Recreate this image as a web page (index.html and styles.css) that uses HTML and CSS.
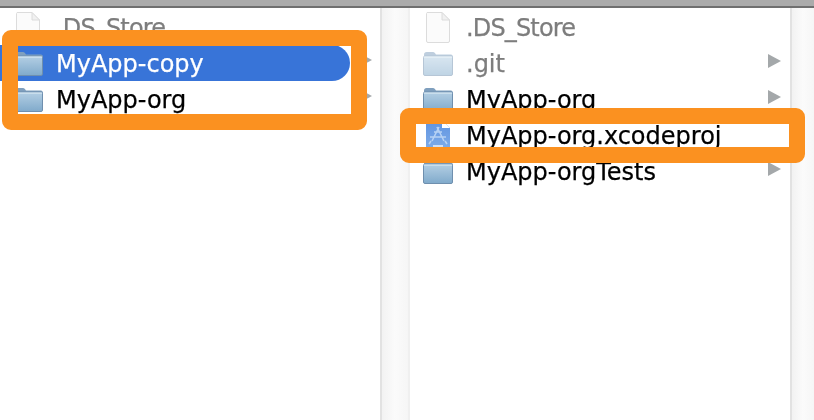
FILE: index.html
```html
<!DOCTYPE html>
<html lang="en">
<head>
<meta charset="utf-8">
<title>Finder columns</title>
<link rel="stylesheet" href="styles.css">
</head>
<body>
<svg class="defs" width="0" height="0" aria-hidden="true">
  <defs>
    <linearGradient id="fold" x1="0" y1="0" x2="0" y2="1"><stop offset="0" stop-color="#b4cfe4"/><stop offset="1" stop-color="#80aacb"/></linearGradient>
    <linearGradient id="proj" x1="0" y1="0" x2="0" y2="1"><stop offset="0" stop-color="#5f93e0"/><stop offset="1" stop-color="#80aeea"/></linearGradient>
    <symbol id="folder" viewBox="0 0 30 25">
      <path d="M1 6V3.500C1 2 2 1 3.500 1H10C11.500 1 12 2 13 3.500H28C29 3.500 30 4.500 30 6V8H1Z" fill="#7f9fbe"/>
      <rect x="0.500" y="5" width="29" height="19.500" rx="1.500" fill="url(#fold)" stroke="#6f8fae" stroke-width="1"/>
      <rect x="1" y="5.500" width="28" height="1.200" fill="#d5e5f1"/>
    </symbol>
    <symbol id="doc" viewBox="0 0 24 31">
      <path d="M1 .5H16L23.500 8V29A1.500 1.500 0 0 1 22 30.500H2A1.500 1.500 0 0 1 .5 29V1.500Z" fill="#fbfbfb" stroke="#dcdcdc"/>
      <path d="M16 .5V8H23.500Z" fill="#f1f1f1" stroke="#dcdcdc"/>
    </symbol>
    <symbol id="proj-doc" viewBox="0 0 24 31">
      <path d="M1 0H16L24 8V31H0V1Z" fill="url(#proj)"/>
      <path d="M16 0V8H24Z" fill="#fff"/>
      <path d="M13 7L6 21M11 7L18 21M4 17H20M8 12H16M5 21L3 24M19 21L21 24" fill="none" stroke="#b7d2f4" stroke-width="1.600"/>
      <rect x="7" y="25" width="10" height="3" fill="#cfe0f7"/>
    </symbol>
  </defs>
</svg>
<div class="window">
  <div class="titlebar"></div>
  <div class="columns">
    <section class="column column-left">
      <div class="row"><svg class="icon doc"><use href="#doc"/></svg><span class="name muted tight">.DS_Store</span></div>
      <div class="row selected"><svg class="icon folder"><use href="#folder"/></svg><span class="name">MyApp-copy</span><i class="arrow arrow-left"></i></div>
      <div class="row"><svg class="icon folder"><use href="#folder"/></svg><span class="name">MyApp-org</span><i class="arrow arrow-left"></i></div>
    </section>
    <div class="gutter"></div>
    <section class="column column-right">
      <div class="row"><svg class="icon doc"><use href="#doc"/></svg><span class="name muted tight">.DS_Store</span></div>
      <div class="row"><svg class="icon folder faded"><use href="#folder"/></svg><span class="name muted">.git</span><i class="arrow"></i></div>
      <div class="row"><svg class="icon folder"><use href="#folder"/></svg><span class="name">MyApp-org</span><i class="arrow"></i></div>
      <div class="row"><svg class="icon doc"><use href="#proj-doc"/></svg><span class="name">MyApp-org.xcodeproj</span></div>
      <div class="row"><svg class="icon folder"><use href="#folder"/></svg><span class="name">MyApp-orgTests</span><i class="arrow"></i></div>
    </section>
    <div class="gutter gutter-end"></div>
  </div>
  <div class="callout callout-left"></div>
  <div class="callout callout-right"></div>
</div>
</body>
</html>
```
FILE: styles.css
```css
html, body {
  margin: 0;
  padding: 0;
  background: #fff;
}
.defs {
  position: absolute;
}
.window {
  position: relative;
  width: 814px;
  height: 420px;
  overflow: hidden;
  font-family: "DejaVu Sans", sans-serif;
  font-size: 24px;
  color: #000;
}
.titlebar {
  height: 6px;
  background: #ababab;
  border-bottom: 2px solid #6f6f6f;
}
.columns {
  display: flex;
  height: 412px;
  filter: blur(0.35px);
}
.column {
  padding-top: 1px;
  background: #fff;
  box-sizing: border-box;
}
.column-left,
.column-right {
  width: 380px;
  flex: none;
}
.gutter {
  width: 30px;
  flex: none;
  box-sizing: border-box;
  border-left: 2px solid #e2e2e2;
  border-right: 2px solid #f0f0f0;
  background: linear-gradient(90deg, #f2f2f2, #fbfbfb 50%, #f6f6f6);
}
.gutter-end {
  width: 24px;
  border-right: 0;
}
.row {
  position: relative;
  display: flex;
  align-items: center;
  height: 36px;
  padding-left: 16px;
  box-sizing: border-box;
}
.selected {
  width: 350px;
  color: #fff;
  background: #3874d8;
  border-radius: 0 18px 18px 0;
}
.icon {
  flex: none;
}
.icon.doc {
  width: 24px;
  height: 31px;
}
.icon.folder {
  width: 30px;
  height: 25px;
  margin-left: -3px;
}
.faded {
  opacity: 0.5;
}
.name {
  position: absolute;
  left: 56px;
  padding-top: 2px;
  white-space: nowrap;
  -webkit-text-stroke: 0.25px currentColor;
}
.muted {
  color: #7d7d7d;
}
.tight {
  letter-spacing: -0.85px;
}
.arrow {
  position: absolute;
  left: 358px;
  top: 9px;
  width: 0;
  height: 0;
  border-left: 13px solid #a4a8aa;
  border-top: 7px solid transparent;
  border-bottom: 7px solid transparent;
}
.arrow-left {
  left: 359px;
  top: 8px;
}
.callout {
  position: absolute;
  box-sizing: border-box;
  border: 16px solid #fb9120;
  border-radius: 9px;
}
.callout-left {
  left: 2px;
  top: 30px;
  width: 365px;
  height: 100px;
}
.callout-right {
  left: 400px;
  top: 108px;
  width: 405px;
  height: 55px;
}
```
